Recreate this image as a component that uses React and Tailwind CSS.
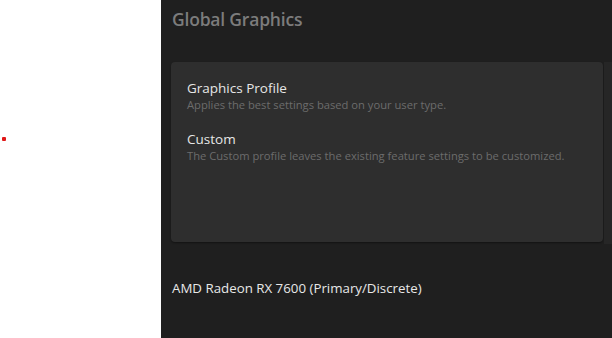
export default function App() {
  return (
    <div className="flex w-[612px] h-[338px] overflow-hidden" style={{ fontFamily: '"Open Sans", "Noto Sans", sans-serif' }}>
      <div className="w-[161px] shrink-0 bg-white relative">
        <div className="absolute left-[2px] top-[137px] w-[4px] h-[4px] bg-[#e01818] rounded-[1px]" />
      </div>
      <div className="flex-1 bg-[#1f1f1f] flex flex-col">
        <div className="pl-[11px] pt-[6px] text-[17.5px] font-semibold text-[#7c7c7c] leading-[26px] tracking-[-0.2px]">
          Global Graphics
        </div>
        <div className="flex mt-[30px] pl-[10px] gap-[1px]">
          <div className="w-[432px] h-[180px] bg-[#2e2e2e] rounded-[4px] shadow-[0_1px_2px_rgba(0,0,0,0.4)] px-[16px] pt-[17px] flex flex-col">
            <div className="text-[13.5px] leading-[18px] text-[#e6e6e6]">Graphics Profile</div>
            <div className="text-[11.2px] leading-[16px] text-[#6c6c6c]">Applies the best settings based on your user type.</div>
            <div className="mt-[17px] text-[13.5px] leading-[18px] text-[#e6e6e6]">Custom</div>
            <div className="text-[11.2px] leading-[16px] text-[#6c6c6c]">The Custom profile leaves the existing feature settings to be customized.</div>
          </div>
          <div className="flex-1 h-[182px] bg-[#262626]" />
        </div>
        <div className="pl-[11px] mt-[35px] text-[13.3px] leading-[18px] text-[#e8e8e8]">
          AMD Radeon RX 7600 (Primary/Discrete)
        </div>
      </div>
    </div>
  );
}
